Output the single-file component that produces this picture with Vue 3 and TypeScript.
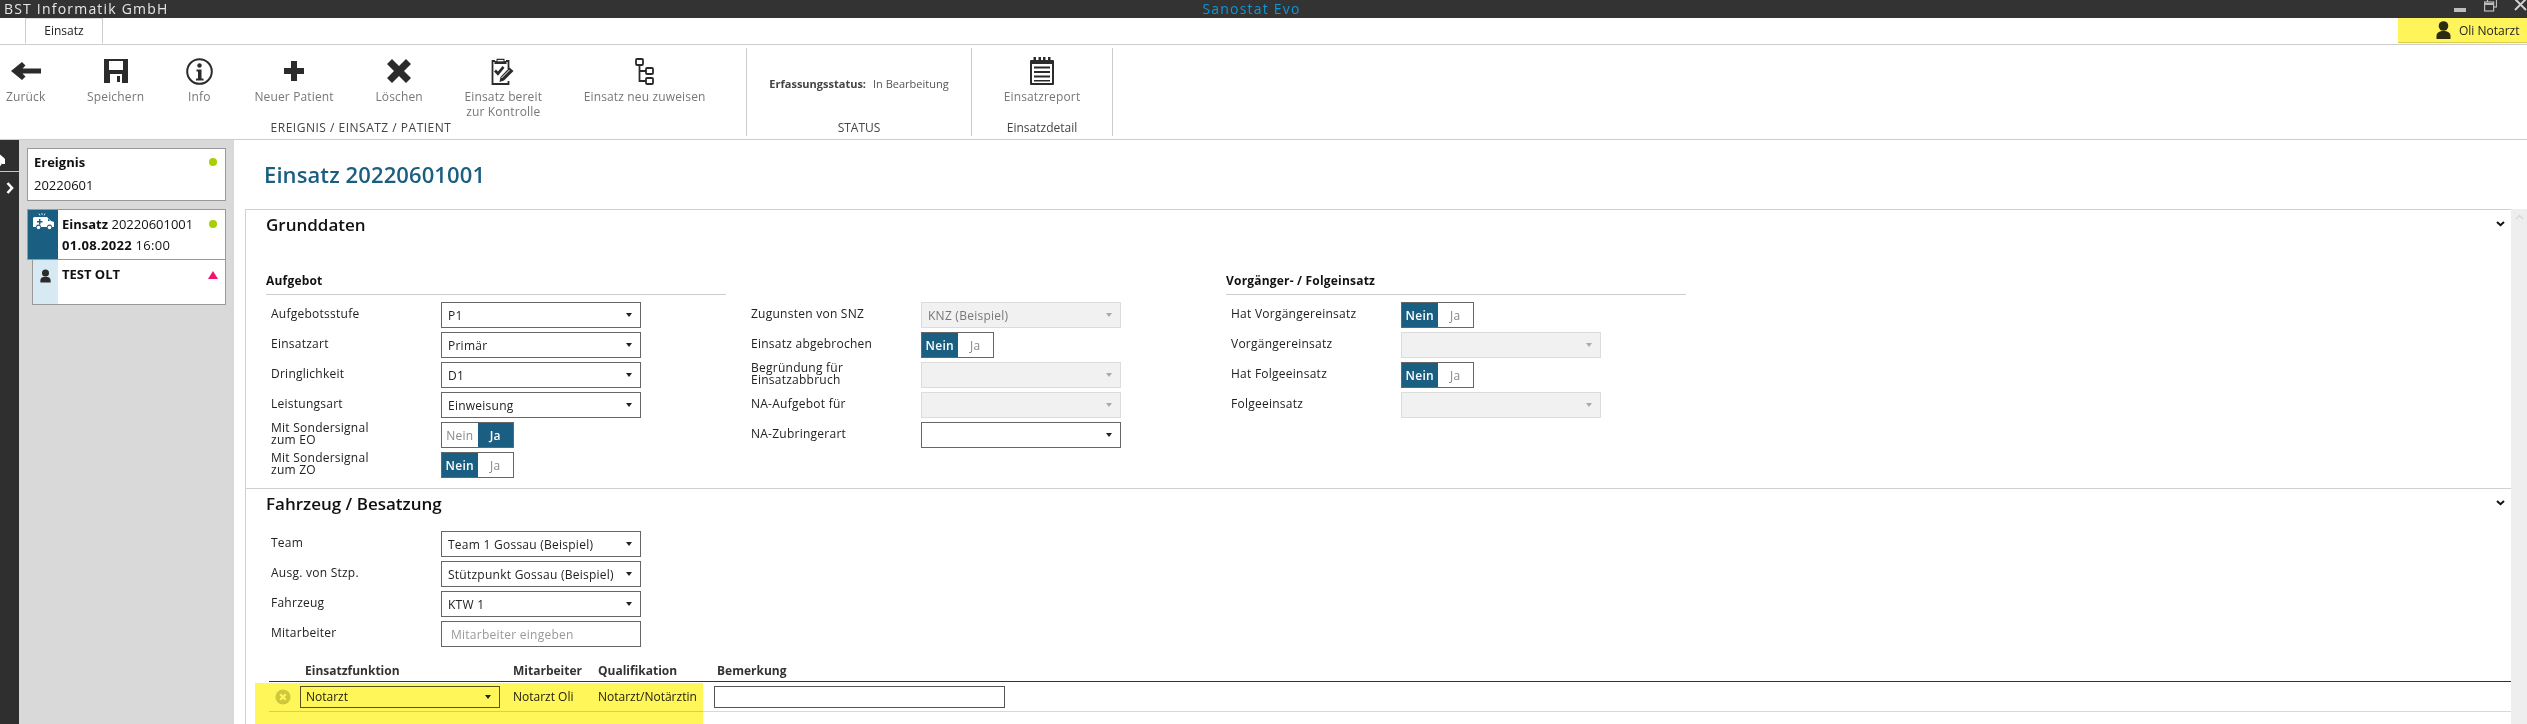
<script setup lang="ts">
type Field = { label: string; kind: 'select' | 'disabled' | 'toggle' | 'input'; value?: string; on?: 'Nein' | 'Ja' };

const tools = [
  { icon: 'back', lines: ['Zurück'] },
  { icon: 'save', lines: ['Speichern'] },
  { icon: 'info', lines: ['Info'] },
  { icon: 'plus', lines: ['Neuer Patient'] },
  { icon: 'cross', lines: ['Löschen'] },
  { icon: 'check', lines: ['Einsatz bereit', 'zur Kontrolle'] },
  { icon: 'tree', lines: ['Einsatz neu zuweisen'] },
];

const columns: { title: string; fields: Field[] }[] = [
  {
    title: 'Aufgebot',
    fields: [
      { label: 'Aufgebotsstufe', kind: 'select', value: 'P1' },
      { label: 'Einsatzart', kind: 'select', value: 'Primär' },
      { label: 'Dringlichkeit', kind: 'select', value: 'D1' },
      { label: 'Leistungsart', kind: 'select', value: 'Einweisung' },
      { label: 'Mit Sondersignal\nzum EO', kind: 'toggle', on: 'Ja' },
      { label: 'Mit Sondersignal\nzum ZO', kind: 'toggle', on: 'Nein' },
    ],
  },
  {
    title: '',
    fields: [
      { label: 'Zugunsten von SNZ', kind: 'disabled', value: 'KNZ (Beispiel)' },
      { label: 'Einsatz abgebrochen', kind: 'toggle', on: 'Nein' },
      { label: 'Begründung für\nEinsatzabbruch', kind: 'disabled' },
      { label: 'NA-Aufgebot für', kind: 'disabled' },
      { label: 'NA-Zubringerart', kind: 'select' },
    ],
  },
  {
    title: 'Vorgänger- / Folgeinsatz',
    fields: [
      { label: 'Hat Vorgängereinsatz', kind: 'toggle', on: 'Nein' },
      { label: 'Vorgängereinsatz', kind: 'disabled' },
      { label: 'Hat Folgeeinsatz', kind: 'toggle', on: 'Nein' },
      { label: 'Folgeeinsatz', kind: 'disabled' },
    ],
  },
];

const crew: Field[] = [
  { label: 'Team', kind: 'select', value: 'Team 1 Gossau (Beispiel)' },
  { label: 'Ausg. von Stzp.', kind: 'select', value: 'Stützpunkt Gossau (Beispiel)' },
  { label: 'Fahrzeug', kind: 'select', value: 'KTW 1' },
  { label: 'Mitarbeiter', kind: 'input', value: 'Mitarbeiter eingeben' },
];
</script>

<template>
  <div class="app">
    <header class="titlebar">
      <span class="company">BST Informatik GmbH</span>
      <span class="product">Sanostat Evo</span>
      <div class="winctl">
        <span class="min"></span>
        <svg class="restore" width="13" height="12" viewBox="0 0 13 12" fill="none" stroke="#bdbdbd" stroke-width="1.2"><rect x="3.5" y="-2" width="9" height="9" /><rect x="0.6" y="2" width="9" height="9" fill="#333" /><path d="M0.6 4h9" stroke-width="2" /></svg>
        <svg class="close" width="13" height="11" viewBox="0 0 13 11" stroke="#d0d0d0" stroke-width="2"><path d="M1 -1l11 11M12 -1L1 10" /></svg>
      </div>
    </header>

    <div class="tabs">
      <div class="tab">Einsatz</div>
      <div class="user">
        <svg width="15" height="18" viewBox="0 0 15 18" fill="#2b2b12"><circle cx="7.5" cy="5" r="4.8" /><path d="M0.5 18v-3c0-3.500 3-5 7-5s7 1.500 7 5v3z" /></svg>
        <span>Oli Notarzt</span>
      </div>
    </div>

    <div class="toolbar">
      <section class="group g-main">
        <div class="tools">
          <div v-for="t in tools" :key="t.icon" class="tool">
            <div class="icon">
              <svg v-if="t.icon === 'back'" width="30" height="18" viewBox="0 0 30 18" fill="#2b2b2b"><path d="M11 0l3.500 3.500-3 3H30v5H11.500l3 3L11 18 0 9z" /></svg>
              <svg v-else-if="t.icon === 'save'" width="24" height="24" viewBox="0 0 24 24" fill="#2b2b2b"><path fill-rule="evenodd" d="M0 0h24v24H0zM5 2v9h14V2zM6 15v9h12v-9z" /><path d="M13 17h3v6h-3z" /></svg>
              <svg v-else-if="t.icon === 'info'" width="27" height="27" viewBox="0 0 27 27"><circle cx="13.500" cy="13.500" r="12.300" fill="none" stroke="#2b2b2b" stroke-width="2" /><circle cx="13.500" cy="7.500" r="2.200" fill="#2b2b2b" /><path d="M10.500 11.500h5v9h2v2h-7.500v-2h2v-7h-1.500z" fill="#2b2b2b" /></svg>
              <svg v-else-if="t.icon === 'plus'" width="20" height="20" viewBox="0 0 20 20" fill="#2b2b2b"><path d="M7 0h6v7h7v6h-7v7H7v-7H0V7h7z" /></svg>
              <svg v-else-if="t.icon === 'cross'" width="24" height="24" viewBox="0 0 24 24" fill="#2b2b2b"><path d="M0 5l5-5 7 7 7-7 5 5-7 7 7 7-5 5-7-7-7 7-5-5 7-7z" /></svg>
              <svg v-else-if="t.icon === 'check'" width="24" height="28" viewBox="0 0 24 28"><path d="M4 4H1.500v23h16V24M15 4h2.500v8" fill="none" stroke="#2b2b2b" stroke-width="1.800" /><path d="M5.500 4V1.800h8V4h2v3h-12V4z" fill="#2b2b2b" /><rect x="6.500" y="3" width="6" height="1.300" fill="#fff" /><path d="M3 14.500l2-2 2 2 4.500-5.500 2 1.700-6.500 8z" fill="#2b2b2b" /><path d="M8.500 25l1-5 9-9.500 4 3.500-9.500 9.500z" fill="#2b2b2b" /><path d="M10.500 21l8-8" stroke="#fff" stroke-width="1" /></svg>
              <svg v-else width="19" height="27" viewBox="0 0 19 27" fill="none" stroke="#2b2b2b" stroke-width="1.800"><rect x="1" y="1" width="7" height="6" rx="1" /><rect x="11" y="10" width="7" height="6" rx="1" /><rect x="11" y="20" width="7" height="6" rx="1" /><path d="M4.500 7v16H11M4.500 13H11" /></svg>
            </div>
            <span v-for="l in t.lines" :key="l" class="tool-label">{{ l }}</span>
          </div>
        </div>
        <div class="group-name name-main">EREIGNIS / EINSATZ / PATIENT</div>
      </section>
      <section class="group g-status">
        <div class="status"><b>Erfassungsstatus:</b><span>In Bearbeitung</span></div>
        <div class="group-name">STATUS</div>
      </section>
      <section class="group g-report">
        <div class="tool">
          <div class="icon">
            <svg width="24" height="28" viewBox="0 0 24 28" fill="#2b2b2b"><path fill-rule="evenodd" d="M1 3h22q1 0 1 1v23q0 1-1 1H1q-1 0-1-1V4q0-1 1-1zM2 7v19h20V7z" /><path d="M3.500 0h2.500v5H3.500zM8.500 0h2.500v5H8.500zM13 0h2.500v5H13zM18 0h2.500v5H18zM4 9.500h16v2H4zM4 14h16v2H4zM4 18.500h16v2H4zM4 23h16v1.500H4z" /></svg>
          </div>
          <span class="tool-label">Einsatzreport</span>
        </div>
        <div class="group-name">Einsatzdetail</div>
      </section>
    </div>

    <div class="body">
      <nav class="rail">
        <div class="rail-top">
          <svg width="24" height="19" viewBox="0 0 24 19" fill="#fff"><path d="M9 0l1 3M13 0l-1 3" stroke="#fff" /><path fill-rule="evenodd" d="M1 5h14l6 5 2 2v5h-3a3 3 0 0 0-5 0H9a3 3 0 0 0-5 0H1z" /><circle cx="6.500" cy="17" r="2" /><circle cx="17.500" cy="17" r="2" /></svg>
        </div>
        <svg class="rail-chev" width="8" height="12" viewBox="0 0 8 12" fill="none" stroke="#fff" stroke-width="2.600"><path d="M1.500 1l4.500 5-4.500 5" /></svg>
      </nav>

      <aside class="tree">
        <div class="card event">
          <div class="card-line"><b>Ereignis</b><i class="dot"></i></div>
          <div class="card-line">20220601</div>
        </div>
        <div class="mission">
          <div class="card m-head">
            <div class="m-side">
              <svg width="21" height="17" viewBox="0 0 21 17" fill="#fff"><path d="M9 0v2M12 0.500l-1 2M6 0.500l1 2" stroke="#cfe3ee" /><path fill-rule="evenodd" d="M1 4h13l4 4 3 1v5h-2a2.500 2.500 0 0 0-5 0H8a2.500 2.500 0 0 0-5 0H0V5zM15 5.500V8h2zM6 6v2H4v1.500h2v2h1.500v-2h2V8h-2V6z" /><circle cx="5.500" cy="14.500" r="1.800" /><circle cx="16.500" cy="14.500" r="1.800" /></svg>
            </div>
            <div class="m-text">
              <div class="card-line"><span><b>Einsatz</b> 20220601001</span><i class="dot"></i></div>
              <div class="card-line date"><span><b>01.08.2022</b> 16:00</span></div>
            </div>
          </div>
          <div class="card m-patient">
            <div class="p-side">
              <svg width="11" height="14" viewBox="0 0 15 18" fill="#2b2b2b"><circle cx="7.500" cy="5" r="4.800" /><path d="M0.500 18v-3c0-3.500 3-5 7-5s7 1.500 7 5v3z" /></svg>
            </div>
            <div class="p-text"><b>TEST OLT</b><i class="tri"></i></div>
          </div>
        </div>
      </aside>

      <main class="main">
        <h1 class="page-title">Einsatz 20220601001</h1>
        <div class="content">
          <div class="panels">
            <section class="panel first">
              <div class="panel-head">
                <h2>Grunddaten</h2>
                <svg width="9" height="6" viewBox="0 0 9 6" fill="none" stroke="#111" stroke-width="2"><path d="M1 1l3.500 3.200L8 1" /></svg>
              </div>
              <div class="form-cols">
                <div v-for="(c, ci) in columns" :key="ci" class="form-col">
                  <div class="col-title" :class="{ blank: !c.title }">{{ c.title }}</div>
                  <div v-for="f in c.fields" :key="f.label" class="row">
                    <label>{{ f.label }}</label>
                    <div v-if="f.kind === 'toggle'" class="toggle">
                      <span :class="{ on: f.on === 'Nein' }">Nein</span>
                      <span :class="{ on: f.on === 'Ja' }">Ja</span>
                    </div>
                    <div v-else class="ctl" :class="f.kind">
                      <span>{{ f.value }}</span><i class="caret"></i>
                    </div>
                  </div>
                </div>
              </div>
            </section>
            <section class="panel second">
              <div class="panel-head">
                <h2>Fahrzeug / Besatzung</h2>
                <svg width="9" height="6" viewBox="0 0 9 6" fill="none" stroke="#111" stroke-width="2"><path d="M1 1l3.500 3.200L8 1" /></svg>
              </div>
              <div class="crew">
                <div v-for="f in crew" :key="f.label" class="row">
                  <label>{{ f.label }}</label>
                  <div class="ctl" :class="f.kind">
                    <span>{{ f.value }}</span><i v-if="f.kind === 'select'" class="caret"></i>
                  </div>
                </div>
              </div>
              <div class="tbl">
                <div class="marker"></div>
                <div class="tr th">
                  <span></span><span class="th-first">Einsatzfunktion</span><span>Mitarbeiter</span><span>Qualifikation</span><span class="th-note">Bemerkung</span>
                </div>
                <div class="tr td">
                  <span class="del"><svg width="16" height="16" viewBox="0 0 16 16"><circle cx="8" cy="8" r="7.600" fill="#cfcfb0" /><path d="M5.200 5.200l5.600 5.600M10.800 5.200l-5.600 5.600" stroke="#fff" stroke-width="2.200" /></svg></span>
                  <div class="ctl select small"><span>Notarzt</span><i class="caret"></i></div>
                  <span>Notarzt Oli</span>
                  <span>Notarzt/Notärztin</span>
                  <div class="ctl input small note"></div>
                </div>
              </div>
            </section>
          </div>
          <div class="scrollbar">
            <svg width="9" height="6" viewBox="0 0 9 6" fill="none" stroke="#d8d8d8" stroke-width="1.500"><path d="M1 5l3.500-3.500L8 5" /></svg>
          </div>
        </div>
      </main>
    </div>
  </div>
</template>

<style scoped>
.app {
  width: 2527px;
  height: 724px;
  overflow: hidden;
  display: flex;
  flex-direction: column;
  background: #fff;
  color: #222;
  font-family: "Open Sans", "Liberation Sans", sans-serif;
  font-size: 12px;
}
.titlebar {
  flex: 0 0 18px;
  background: #333;
  display: grid;
  grid-template-columns: 1fr auto 1fr;
  align-items: center;
  overflow: hidden;
  padding-right: 24px;
}
.company { color: #e6e6e6; font-size: 14px; letter-spacing: 1.200px; padding-left: 4px; line-height: 18px; white-space: nowrap; }
.product { color: #0d96d8; font-size: 14px; letter-spacing: 1.200px; line-height: 18px; white-space: nowrap; }
.winctl { display: flex; justify-content: flex-end; align-items: flex-start; height: 18px; margin-right: -24px; }
.min { width: 12px; height: 4px; background: #bdbdbd; margin-top: 8px; }
.restore { margin-left: 18px; }
.close { margin-left: 17px; }

.tabs {
  flex: 0 0 26px;
  display: flex;
  justify-content: space-between;
  border-bottom: 1px solid #ccc;
  box-sizing: border-box;
}
.tab {
  margin-left: 25px;
  width: 78px;
  height: 26px;
  box-sizing: border-box;
  border: 1px solid #ccc;
  border-top-color: #ddd;
  border-bottom: 1px solid #fff;
  text-align: center;
  line-height: 24px;
  color: #222;
}
.user {
  width: 129px;
  height: 25px;
  box-sizing: border-box;
  background: #fff45a;
  border-bottom: 1px solid #d6cd4c;
  display: flex;
  align-items: center;
  padding-left: 38px;
  gap: 8px;
  color: #222;
}

.toolbar {
  flex: 0 0 95px;
  box-sizing: border-box;
  display: flex;
  border-bottom: 1px solid #ccc;
  padding-top: 3px;
  padding-bottom: 3px;
}
.group {
  box-sizing: border-box;
  border-right: 1px solid #ccc;
  display: flex;
  flex-direction: column;
  align-items: center;
  height: 88px;
}
.g-main { width: 747px; align-items: flex-start; }
.g-status { width: 225px; }
.g-report { width: 141px; }
.tools { display: flex; gap: 41.600px; padding-left: 6px; height: 72px; }
.tool { display: flex; flex-direction: column; align-items: center; padding-top: 7px; height: 72px; box-sizing: border-box; }
.icon { height: 32px; display: flex; align-items: center; justify-content: center; margin-bottom: 2px; }
.tool-label { color: #777; line-height: 15px; white-space: nowrap; letter-spacing: 0.15px; }
.group-name { margin-top: auto; line-height: 16px; color: #444; }
.name-main { align-self: center; padding-right: 24px; letter-spacing: 0.5px; }
.status { height: 72px; box-sizing: border-box; padding-top: 28px; display: flex; gap: 7px; font-size: 11px; line-height: 16px; white-space: nowrap; }
.status b { font-weight: 700; color: #444; }
.status span { color: #555; }

.body { flex: 1; min-height: 0; display: flex; }
.rail { flex: 0 0 19px; background: #2f2f2f; display: flex; flex-direction: column; align-items: center; overflow: hidden; }
.rail-top { width: 19px; height: 31px; border-bottom: 1px solid #9fd0e6; box-sizing: content-box; overflow: hidden; }
.rail-top svg { margin: 7px 0 0 -18px; display: block; }
.rail-chev { margin-top: 10px; }

.tree { flex: 0 0 215px; box-sizing: border-box; background: #d9d9d9; padding: 8px 8px 0; font-size: 13px; }
.card { box-sizing: border-box; border: 1px solid #999; background: #fff; }
.card-line { display: flex; justify-content: space-between; align-items: center; line-height: 22px; white-space: nowrap; color: #111; }
.card-line b { font-weight: 700; }
.date { letter-spacing: 0.3px; }
.event { height: 53px; padding: 2px 8px 0 6px; }
.event .card-line + .card-line { margin-top: 1px; }
.dot { width: 8px; height: 8px; border-radius: 50%; background: #a6d100; font-style: normal; flex: none; }
.mission { margin-top: 8px; display: flex; flex-direction: column; }
.m-head { height: 51px; display: flex; }
.m-side { flex: 0 0 30px; background: #1a5e82; display: flex; justify-content: center; padding-top: 3px; box-sizing: border-box; }
.m-text { flex: 1; padding: 3px 8px 0 4px; }
.m-text .card-line + .card-line { margin-top: -1px; }
.m-patient { margin-left: 5px; height: 45px; display: flex; border-top: 0; }
.p-side { flex: 0 0 25px; background: #d7eaf4; display: flex; justify-content: center; padding-top: 9px; box-sizing: border-box; }
.p-text { flex: 1; display: flex; justify-content: space-between; align-items: flex-start; padding: 3px 7px 0 4px; line-height: 22px; color: #111; }
.p-text b { font-weight: 700; }
.tri { width: 0; height: 0; border-left: 5px solid transparent; border-right: 5px solid transparent; border-bottom: 8px solid #f2126e; margin-top: 8px; }

.main { flex: 1; min-width: 0; display: flex; flex-direction: column; padding-left: 11px; }
.page-title { flex: 0 0 69px; box-sizing: border-box; margin: 0; padding: 19px 0 0 19px; font-size: 22px; line-height: 30px; font-weight: 600; color: #1a5e82; letter-spacing: 0.1px; }
.content { flex: 1; min-height: 0; display: flex; }
.panels { flex: 1; min-width: 0; border-left: 1px solid #d0d0d0; overflow: hidden; }
.scrollbar { flex: 0 0 16px; background: #eee; display: flex; justify-content: center; align-items: flex-start; padding-top: 5px; box-sizing: border-box; }
.panel { border-top: 1px solid #d0d0d0; box-sizing: border-box; padding-left: 20px; }
.first { height: 279px; }
.second { height: 237px; border-bottom: 1px solid #ccc; }
.panel-head { display: flex; justify-content: space-between; align-items: flex-start; padding-right: 6px; }
.panel-head h2 { margin: 0; font-size: 17px; font-weight: 600; color: #111; line-height: 30px; }
.panel-head svg { margin-top: 11px; }
.first .panel-head { height: 57px; }
.second .panel-head { height: 42px; }
.form-cols { display: grid; grid-template-columns: repeat(3, 460px); column-gap: 20px; }
.col-title { height: 28px; border-bottom: 1px solid #ccc; font-weight: 700; color: #111; line-height: 28px; box-sizing: border-box; margin-bottom: 7px; letter-spacing: 0.2px; }
.col-title.blank { border-bottom-color: transparent; }
.row { display: flex; align-items: center; height: 26px; margin-bottom: 4px; padding-left: 5px; letter-spacing: 0.25px; }
.row label { flex: 0 0 170px; white-space: pre-line; line-height: 12px; color: #222; padding-bottom: 2px; }
.ctl { flex: 0 0 200px; width: 200px; height: 26px; box-sizing: border-box; border: 1px solid #666; display: flex; align-items: center; justify-content: space-between; padding: 0 6px; background: #fff; color: #222; }
.caret { width: 0; height: 0; border-left: 3.500px solid transparent; border-right: 3.500px solid transparent; border-top: 4px solid #222; margin-right: 2px; }
.disabled { background: #f1f1f1; border-color: #dcdcdc; color: #777; }
.disabled .caret { border-top-color: #aaa; }
.input { color: #999; padding-left: 9px; }
.toggle { display: flex; width: 73px; height: 26px; box-sizing: border-box; border: 1px solid #666; }
.toggle span { flex: 1; display: flex; align-items: center; justify-content: center; color: #888; }
.toggle .on { background: #1a5e82; color: #fff; font-weight: 600; }
.crew { height: 130px; }
.tbl { position: relative; margin-left: 3px; }
.marker { position: absolute; left: -14px; top: 22px; width: 448px; height: 42px; background: #fff75a; mix-blend-mode: multiply; pointer-events: none; }
.tr { display: grid; grid-template-columns: 31px 213px 85px 116px 1fr; align-items: center; }
.th { height: 20px; border-bottom: 1px solid #333; font-weight: 700; color: #333; line-height: 14px; box-sizing: content-box; }
.th-first { padding-left: 5px; }
.th-note { padding-left: 3px; }
.td { height: 30px; border-bottom: 1px solid #d8d8d8; box-sizing: border-box; color: #222; white-space: nowrap; }
.del { display: flex; padding-left: 6px; }
.small { height: 22px; border-color: #555; padding-left: 5px; }
.note { width: 291px; }
</style>
<style>
body { margin: 0; overflow: hidden; }
</style>
